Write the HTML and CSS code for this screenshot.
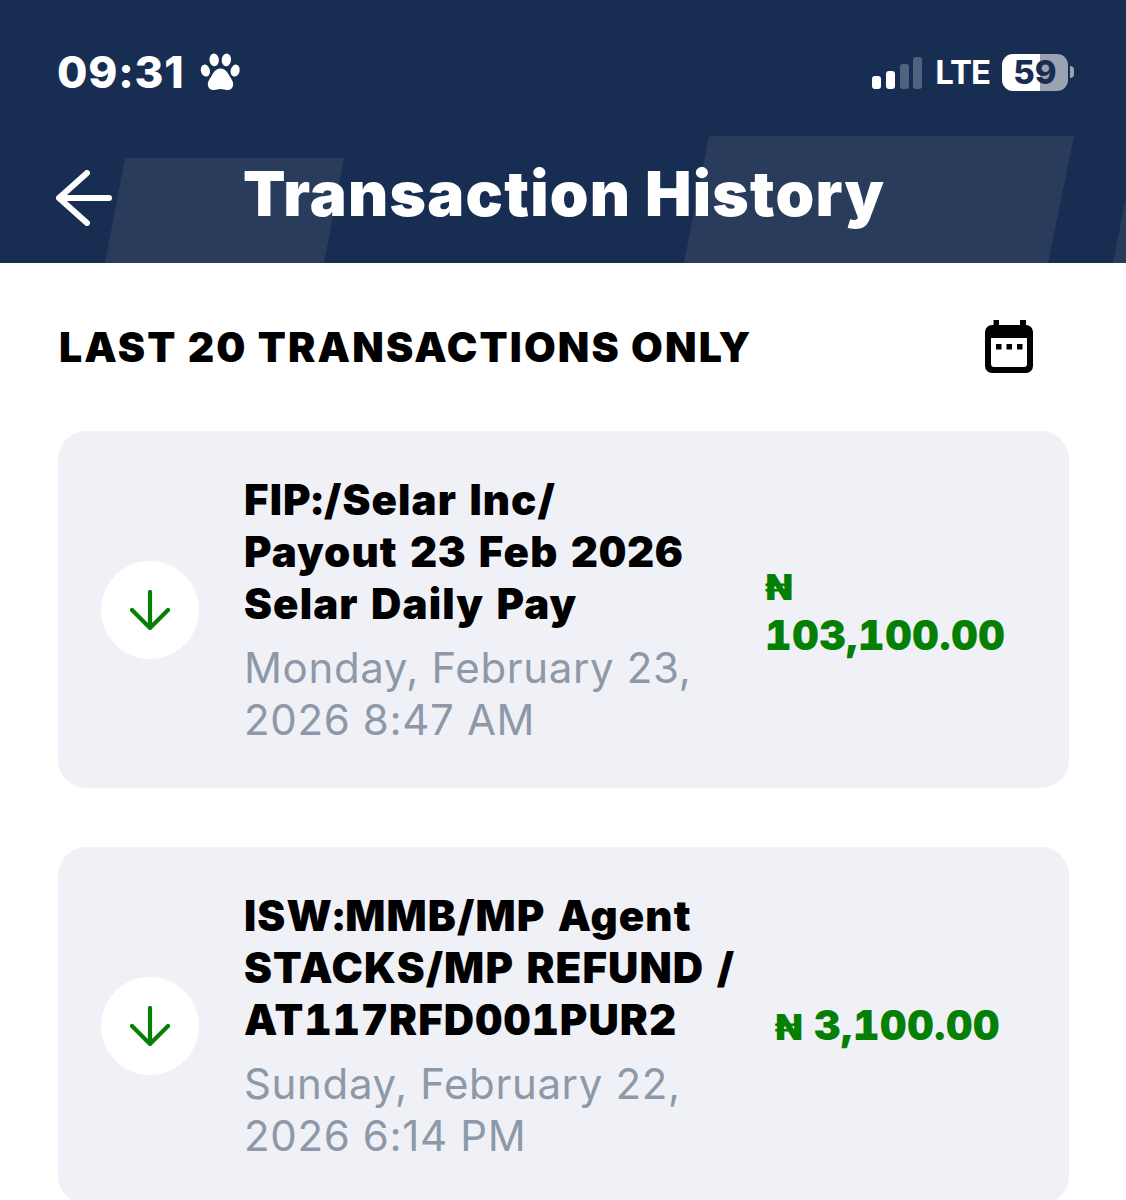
FILE: index.html
```html
<!doctype html>
<html>
 <head>
  <title>Transaction History</title>
  <link rel="stylesheet" href="styles.css">
 </head>
 <body>
  <header class="top">
   <div class="shape shape-a"></div>
   <div class="shape shape-b"></div>
   <div class="shape shape-c"></div>
   <div class="status">
    <div class="clock">
     <span>09:31</span>
     <svg class="paw" viewBox="0 0 42 42" width="41" height="41"><ellipse cx="5.500" cy="19" rx="4.600" ry="6.200" transform="rotate(-14 5.500 19)" fill="#fff"/><ellipse cx="14.500" cy="8" rx="4.800" ry="6.600" transform="rotate(-6 14.500 8)" fill="#fff"/><ellipse cx="27" cy="8" rx="4.800" ry="6.600" transform="rotate(6 27 8)" fill="#fff"/><ellipse cx="36" cy="19" rx="4.600" ry="6.200" transform="rotate(14 36 19)" fill="#fff"/><path d="M21 17c5 0 7 4 9.500 8 2 3 3.500 5 3.500 8 0 4-3 6-6 6-3 0-4-1-7-1s-4 1-7 1c-3 0-6-2-6-6 0-3 1.500-5 3.500-8 2.500-4 4.500-8 9.500-8z" fill="#fff"/></svg>
    </div>
    <div class="indicators">
     <div class="bars"><i class="b1"></i><i class="b2"></i><i class="b3"></i><i class="b4"></i></div>
     <span class="lte">LTE</span>
     <span class="battery">59</span>
     <span class="nub"></span>
    </div>
   </div>
   <div class="titlebar">
    <svg class="back" viewBox="0 0 56 56" width="56" height="56"><path d="M3 28h50M31 3 3 28l28 25" fill="none" stroke="#fff" stroke-width="6" stroke-linecap="round" stroke-linejoin="round"/></svg>
    <h1>Transaction History</h1>
   </div>
  </header>

  <main class="content">
   <div class="section-head">
    <h2>LAST 20 TRANSACTIONS ONLY</h2>
    <svg class="cal" viewBox="0 0 48 54" width="48" height="54"><path d="M8.500 0H14v5h21V0h6v5h-1 1a7 7 0 0 1 7 7v34a7 7 0 0 1-7 7H7a7 7 0 0 1-7-7V12a7 7 0 0 1 7-7h1.500zM6 18v26a3 3 0 0 0 3 3h30a3 3 0 0 0 3-3V18z" fill="#000"/><rect x="11" y="24" width="5.500" height="5.500"/><rect x="21.500" y="24" width="5.500" height="5.500"/><rect x="32" y="24" width="5.500" height="5.500"/></svg>
   </div>

   <div class="card">
    <div class="circle"><svg viewBox="0 0 40 40" width="40" height="40"><path d="M20 2v36M2 20l18 18 18-18" fill="none" stroke="#058005" stroke-width="4.200" stroke-linecap="round" stroke-linejoin="round"/></svg></div>
    <div class="info">
     <div class="name">FIP:/Selar Inc/<br>Payout 23 Feb 2026<br>Selar Daily Pay</div>
     <div class="date">Monday, February 23,<br>2026 8:47 AM</div>
    </div>
    <div class="amount-col"><div class="amount"><span class="naira">₦</span> 103,100.00</div></div>
   </div>

   <div class="card">
    <div class="circle"><svg viewBox="0 0 40 40" width="40" height="40"><path d="M20 2v36M2 20l18 18 18-18" fill="none" stroke="#058005" stroke-width="4.200" stroke-linecap="round" stroke-linejoin="round"/></svg></div>
    <div class="info">
     <div class="name">ISW:MMB/MP Agent<br>STACKS/MP REFUND /<br>AT117RFD001PUR2</div>
     <div class="date">Sunday, February 22,<br>2026 6:14 PM</div>
    </div>
    <div class="amount-col"><div class="amount"><span class="naira">₦</span> 3,100.00</div></div>
   </div>
  </main>
 </body>
</html>
```

FILE: styles.css
```css
* { box-sizing: border-box; }
html, body { margin: 0; height: 1200px; overflow: hidden; }
body { background: #fff; color: #000; font-family: Inter, "Liberation Sans", sans-serif; }

.top { position: relative; height: 263px; padding-top: 36px; background: #172e52; color: #fff; overflow: hidden; }
.shape { position: absolute; background: #2a3c5c; }
.shape-a { left: 105px; top: 158px; width: 239px; height: 105px; clip-path: polygon(20px 0, 100% 0, 219px 100%, 0 100%); }
.shape-b { left: 684px; top: 136px; width: 390px; height: 127px; clip-path: polygon(25px 0, 100% 0, 364px 100%, 0 100%); }
.shape-c { left: 1113px; top: 136px; width: 60px; height: 127px; clip-path: polygon(25px 0, 100% 0, 35px 100%, 0 100%); }

.status { position: relative; display: flex; justify-content: space-between; align-items: center; height: 72px; padding: 0 52px 0 57px; }
.clock { display: flex; align-items: center; gap: 16px; font-size: 44px; font-weight: 800; letter-spacing: 0.8px; }
.indicators { display: flex; align-items: center; }
.bars { display: flex; align-items: flex-end; gap: 4.600px; height: 34px; margin: 0 13px 0 0; }
.bars i { display: block; width: 9px; border-radius: 3px; background: #fff; }
.bars .b1 { height: 13px; }
.bars .b2 { height: 18px; }
.bars .b3 { height: 25px; background: #4e6380; }
.bars .b4 { height: 32px; background: #4e6380; }
.lte { font-size: 33px; font-weight: 700; letter-spacing: -1px; margin-right: 12px; }
.battery { width: 66px; height: 37px; border-radius: 11px; background: linear-gradient(90deg, #fff 38px, #9ba3b1 38px); color: #172e52; font-size: 33px; font-weight: 800; line-height: 37px; text-align: center; }
.nub { width: 4px; height: 12px; margin-left: 2px; border-radius: 0 6px 6px 0; background: #9ba3b1; }

.titlebar { position: relative; display: flex; align-items: center; gap: 131px; padding-left: 56px; margin-top: 51px; }
.back { flex: none; margin-top: 8px; }
h1 { margin: 0; font-size: 62px; font-weight: 900; line-height: 70px; letter-spacing: 1.250px; white-space: nowrap; }

.content { padding: 0 57px 0 58px; }
.section-head { display: flex; justify-content: space-between; align-items: center; height: 168px; padding: 0 36px 0 1px; }
h2 { margin: 0; font-size: 41px; font-weight: 900; letter-spacing: 2.100px; white-space: nowrap; }

.card { display: flex; align-items: center; height: 357px; margin-bottom: 59px; padding-left: 43px; border-radius: 28px; background: #f0f1f7; }
.circle { flex: none; display: flex; align-items: center; justify-content: center; width: 98px; height: 98px; margin-right: 45px; border-radius: 50%; background: #fff; }
.info { flex: none; width: 490px; }
.name { font-size: 42px; font-weight: 900; line-height: 52px; letter-spacing: 1.100px; font-variant-numeric: tabular-nums; white-space: nowrap; }
.date { margin-top: 12px; font-size: 42px; line-height: 52px; letter-spacing: 0.650px; color: #8d99a8; white-space: nowrap; }
.amount-col { flex: none; display: flex; justify-content: center; width: 305px; margin-left: 1px; }
.amount { max-width: 245px; font-size: 41px; font-weight: 900; line-height: 48px; letter-spacing: 0.700px; font-variant-numeric: tabular-nums; color: #058005; }
.naira { font-size: 36px; }
```
